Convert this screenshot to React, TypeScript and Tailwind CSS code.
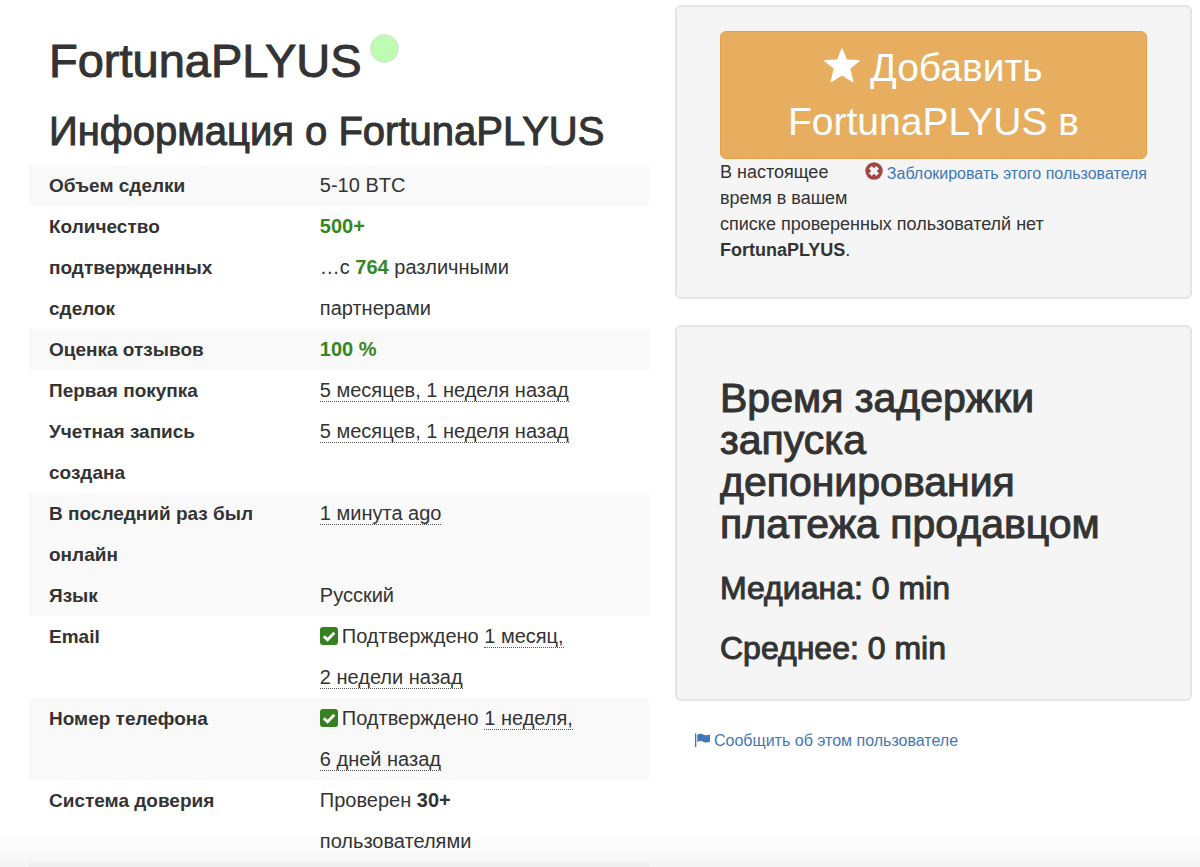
import type { ReactNode } from "react";

const headingStroke = "font-normal [-webkit-text-stroke:1px_#333]";

function StarIcon() {
  return (
    <svg viewBox="0 0 36 35" className="mr-2.5 inline-block h-[35px] w-9 align-[-2px]" fill="currentColor" aria-hidden="true">
      <path d="M17.2 1.2Q18 -.6 18.8 1.2L22.9 11.6L34.8 12Q36.6 12.2 35.2 13.5L26.2 20.8L29.4 33Q29.7 34.9 28.2 34L18 27.4L7.8 34Q6.3 34.9 6.6 33L9.8 20.8L.8 13.5Q-.6 12.2 1.2 12L13.1 11.6Z" />
    </svg>
  );
}

function RemoveIcon() {
  return (
    <svg viewBox="0 0 18 18" className="mr-1 inline-block size-[18px] align-[-1px]" aria-hidden="true">
      <circle cx="9" cy="9" r="8.7" fill="#a14642" />
      <path d="M5.4 5.4L12.6 12.6M12.6 5.4L5.4 12.6" stroke="#f5f5f5" strokeWidth="4" />
    </svg>
  );
}

function FlagIcon() {
  return (
    <svg viewBox="0 0 15 14" className="mr-1 inline-block h-3.5 w-[15px] align-[-1px]" fill="currentColor" aria-hidden="true">
      <path d="M0 .6Q.6 0 1.3 .6V14H0ZM2.3 1.7C4.5 .2 6.3 .5 8.2 1.5C10.3 2.6 12.5 2.3 15 1.5V8.8C12.3 10 10.3 9.7 8.3 8.7C6.3 7.8 4.4 7.7 2.3 9Z" />
    </svg>
  );
}

function CheckIcon() {
  return (
    <svg viewBox="0 0 18 18" className="mr-1 inline-block size-[18px] align-[-2px]" aria-hidden="true">
      <rect width="18" height="18" rx="3" fill="#35801f" />
      <path d="M3.8 9.2L7.6 12.8L14.3 5.8" fill="none" stroke="#fff" strokeWidth="2.9" />
    </svg>
  );
}

function Time({ children }: { children: ReactNode }) {
  return <abbr className="border-b border-dotted border-[#555] no-underline">{children}</abbr>;
}

function Green({ children }: { children: ReactNode }) {
  return <strong className="text-[#35871f]">{children}</strong>;
}

const rows: { label: string; striped?: boolean; value: ReactNode }[] = [
  { label: "Объем сделки", striped: true, value: "5-10 BTC" },
  {
    label: "Количество подтвержденных сделок",
    value: (
      <>
        <Green>500+</Green>
        <br />
        …с <Green>764</Green> различными
        <br />
        партнерами
      </>
    ),
  },
  { label: "Оценка отзывов", striped: true, value: <Green>100 %</Green> },
  { label: "Первая покупка", value: <Time>5 месяцев, 1 неделя назад</Time> },
  { label: "Учетная запись создана", value: <Time>5 месяцев, 1 неделя назад</Time> },
  { label: "В последний раз был онлайн", striped: true, value: <Time>1 минута ago</Time> },
  { label: "Язык", striped: true, value: "Русский" },
  {
    label: "Email",
    value: (
      <>
        <CheckIcon />
        Подтверждено <Time>1 месяц, <br />2 недели назад</Time>
      </>
    ),
  },
  {
    label: "Номер телефона",
    striped: true,
    value: (
      <>
        <CheckIcon />
        Подтверждено <Time>1 неделя, <br />6 дней назад</Time>
      </>
    ),
  },
  {
    label: "Система доверия",
    value: (
      <>
        Проверен <strong>30+</strong>
        <br />
        пользователями
      </>
    ),
  },
];

function Panel({ children }: { children: ReactNode }) {
  return (
    <section className="mb-[26px] rounded-md border-2 border-[#e5e5e5] bg-[#f5f5f5] px-[43px]">{children}</section>
  );
}

export default function App() {
  return (
    <div className="relative h-screen overflow-hidden bg-white font-['Liberation_Sans',Arial,sans-serif] text-[#333]">
      <div className="grid grid-cols-[620fr_517fr] gap-[26px] pr-2 pl-[29px]">
        <main>
          <div className="flex items-start gap-2 px-5 pt-[34px]">
            <h1 className={`text-[47px] leading-[54px] ${headingStroke}`}>FortunaPLYUS</h1>
            <span className="size-[29px] rounded-full border border-[#dcdcdc] bg-[#bffcb3]" role="img" aria-label="Онлайн" />
          </div>
          <h2 className={`px-5 pt-[22px] pb-[13px] text-[40px] leading-[42px] ${headingStroke}`}>
            Информация о FortunaPLYUS
          </h2>
          <table className="w-full table-fixed border-collapse text-[20px] leading-[41px]">
            <colgroup>
              <col className="w-[44%]" />
              <col />
            </colgroup>
            <tbody>
              {rows.map((row) => (
                <tr key={row.label} className={row.striped ? "bg-[#f9f9f9]" : "bg-white"}>
                  <th scope="row" className="pr-10 pl-5 text-left align-top text-[19px] font-bold">
                    {row.label}
                  </th>
                  <td className="pr-12 pl-[18px] align-top">{row.value}</td>
                </tr>
              ))}
            </tbody>
          </table>
          <div className="h-10 bg-[#f9f9f9]" />
        </main>

        <aside className="pt-[5px]">
          <Panel>
            <div className="pt-6 pb-[34px]">
              <button
                type="button"
                className="block w-full rounded-md border border-[#e5a048] bg-[#e7ae60] py-[9px] text-[39px] leading-[54px] text-white"
              >
                <StarIcon />
                Добавить
                <br />
                FortunaPLYUS в
              </button>
              <a href="#block" className="float-right ml-4 text-[16px] leading-[30px] text-[#3f78b5]">
                <RemoveIcon />
                Заблокировать этого пользователя
              </a>
              <p className="text-[18px] leading-[26px]">
                В настоящее время в вашем
                <br />
                списке проверенных пользователй нет <strong>FortunaPLYUS</strong>.
              </p>
            </div>
          </Panel>

          <Panel>
            <h2 className={`pt-[50px] text-[41px] leading-[42px] ${headingStroke}`}>
              Время задержки запуска депонирования платежа продавцом
            </h2>
            <h3 className={`pt-[26px] text-[32px] leading-[34px] ${headingStroke}`}>Медиана: 0 min</h3>
            <h3 className={`pt-[26px] pb-[34px] text-[32px] leading-[34px] ${headingStroke}`}>Среднее: 0 min</h3>
          </Panel>

          <a href="#report" className="ml-5 inline-block text-[16px] leading-[28px] text-[#3f78b5]">
            <FlagIcon />
            Сообщить об этом пользователе
          </a>
        </aside>
      </div>
      <div className="pointer-events-none absolute inset-x-0 bottom-0 h-9 bg-linear-to-b from-transparent to-black/4" />
    </div>
  );
}
